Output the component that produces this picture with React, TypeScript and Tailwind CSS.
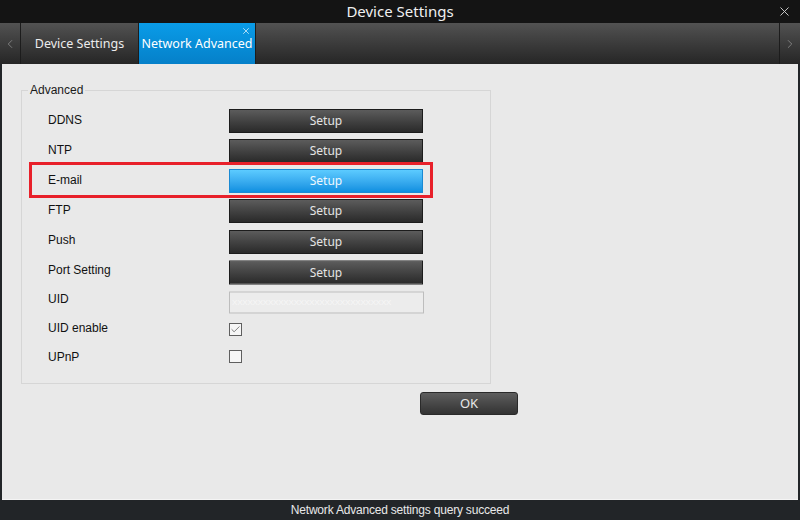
import { X, ChevronLeft, ChevronRight, Check } from "lucide-react";

type Kind = "setup" | "active" | "input" | "checked" | "unchecked";

// h = row height, nudge = the control's offset from the label's centre line
const ROWS: { label: string; kind: Kind; h: number; nudge: string }[] = [
    { label: "DDNS", kind: "setup", h: 30, nudge: "" },
    { label: "NTP", kind: "setup", h: 30, nudge: "" },
    { label: "E-mail", kind: "active", h: 30, nudge: "" },
    { label: "FTP", kind: "setup", h: 30, nudge: "" },
    { label: "Push", kind: "setup", h: 30, nudge: "translate-y-[1px]" },
    { label: "Port Setting", kind: "setup", h: 29, nudge: "translate-y-[2.5px]" },
    { label: "UID", kind: "input", h: 29, nudge: "translate-y-[3.5px]" },
    { label: "UID enable", kind: "checked", h: 29, nudge: "translate-y-[2px]" },
    { label: "UPnP", kind: "unchecked", h: 29, nudge: "" },
];

function SetupButton({ active }: { active?: boolean }) {
    return (
        <button
            className={
                active
                    ? "w-[194px] h-[24px] border border-[#1a8ad3] bg-gradient-to-b from-[#5ccbff] to-[#0a8fe0] text-[12px] text-[#eef8ff] font-['Noto_Sans',sans-serif] leading-none"
                    : "w-[194px] h-[24px] border border-[#1c1c1c] bg-gradient-to-b from-[#5c5c5c] to-[#2a2a2a] text-[12px] text-[#e4e4e4] font-['Noto_Sans',sans-serif] leading-none"
            }
        >
            Setup
        </button>
    );
}

function Control({ kind }: { kind: Kind }) {
    if (kind === "setup") return <SetupButton />;
    if (kind === "active") return <SetupButton active />;
    if (kind === "input") {
        return (
            <div className="w-[195px] h-[22px] border border-[#bdbdbd] bg-[#ececec] flex items-center px-[2px]">
                <span className="text-[8px] text-white/60 tracking-tight whitespace-nowrap">XXXXXXXXXXXXXXXXXXXXXXXXXXXXXXX</span>
            </div>
        );
    }
    return (
        <div className="w-[13px] h-[13px] border border-[#5f5f5f] bg-[#f6f6f6] flex items-center justify-center">
            {kind === "checked" && <Check size={11} strokeWidth={1.6} className="text-[#555]" />}
        </div>
    );
}

export default function App() {
    return (
        <div className="w-[800px] h-[520px] flex flex-col bg-[#222528] overflow-hidden font-['Liberation_Sans',Arial,sans-serif]">
            <div className="h-[23px] bg-[#141414] flex items-center justify-center relative shrink-0">
                <span className="text-[15px] text-[#f0f0f0] font-['Noto_Sans',sans-serif]">Device Settings</span>
                <X size={15} strokeWidth={1.5} className="absolute right-[8px] top-[4px] text-[#d0d0d0]" />
            </div>
            <div className="h-[41px] flex bg-gradient-to-b from-[#525252] to-[#262626] shrink-0">
                <div className="w-[21px] border-r border-[#1c1c1c] flex items-center justify-center">
                    <ChevronLeft size={14} strokeWidth={1.2} className="text-[#9a9a9a]" />
                </div>
                <div className="w-[118px] border-r border-[#1c1c1c] flex items-center justify-center pt-[2px]">
                    <span className="text-[12.5px] text-[#ececec] font-['Noto_Sans',sans-serif]">Device Settings</span>
                </div>
                <div className="w-[117px] bg-gradient-to-b from-[#0a9ce8] to-[#0580c9] border-r border-[#1c1c1c] relative flex items-center justify-center pt-[2px]">
                    <span className="text-[12.5px] text-white font-['Noto_Sans',sans-serif] whitespace-nowrap">Network Advanced</span>
                    <X size={10} strokeWidth={1.6} className="absolute right-[4px] top-[3px] text-white" />
                </div>
                <div className="flex-1" />
                <div className="w-[21px] border-l border-[#1c1c1c] flex items-center justify-center">
                    <ChevronRight size={14} strokeWidth={1.2} className="text-[#9a9a9a]" />
                </div>
            </div>
            <div className="mx-[2px] h-[436px] bg-[#e9e9e9] border-b border-[#f4f4f4] shrink-0 flex flex-col">
                <fieldset className="ml-[19px] mt-[19px] w-[470px] h-[301px] border border-[#d6d6d6] p-0">
                    <legend className="ml-[6px] px-[2px] text-[12px] text-[#1a1a1a] leading-[14px]">Advanced</legend>
                    <div className="flex flex-col mt-[8px] pl-[26px]">
                        {ROWS.map((row) => (
                            <div key={row.label} className="flex items-center relative" style={{ height: row.h }}>
                                <span className="w-[181px] text-[12px] text-[#111]">{row.label}</span>
                                <div className={row.nudge}>
                                    <Control kind={row.kind} />
                                </div>
                                {row.kind === "active" && (
                                    <div className="absolute left-[-19px] top-[-3px] w-[404px] h-[36px] border-[3px] border-[#e8202a]" />
                                )}
                            </div>
                        ))}
                    </div>
                </fieldset>
                <button className="ml-[418px] mt-[8px] w-[98px] h-[23px] rounded-[3px] border border-[#2a2a2a] bg-gradient-to-b from-[#5e5e5e] to-[#333] text-[13px] text-[#e8e8e8] font-['Noto_Sans',sans-serif] leading-none">
                    OK
                </button>
            </div>
            <div className="flex-1 flex items-center justify-center">
                <span className="text-[12px] text-[#e8e8e8] tracking-[-0.2px]">Network Advanced settings query succeed</span>
            </div>
        </div>
    );
}
